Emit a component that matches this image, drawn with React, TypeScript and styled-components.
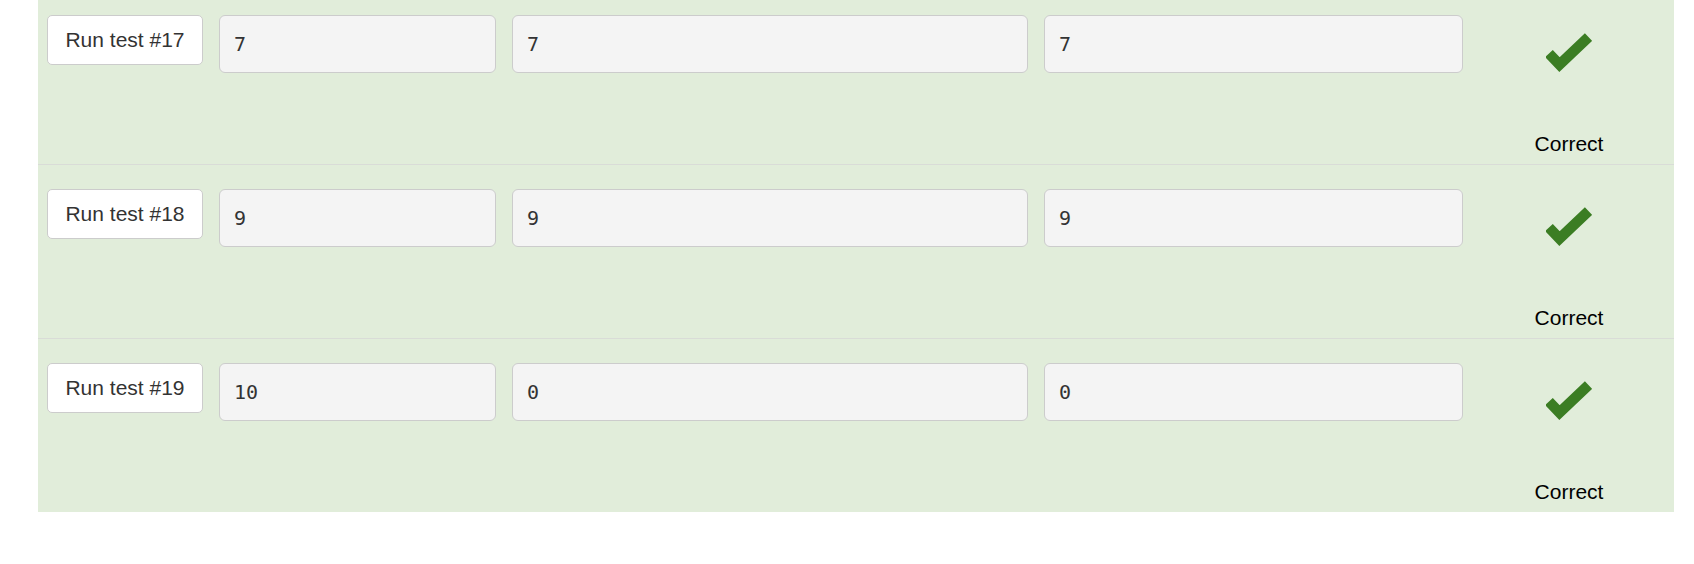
import React from "react";
import styled, { createGlobalStyle } from "styled-components";

const GlobalStyle = createGlobalStyle`
  html, body {
    margin: 0;
    padding: 0;
    background: #ffffff;
    font-family: "Liberation Sans", Arial, sans-serif;
  }
`;

const Page = styled.div`
  margin: -10px 0 0 38px;
  width: 1636px;
`;

const TestList = styled.div`
  display: flex;
  flex-direction: column;
  background: #e1edda;
`;

const TestRow = styled.div`
  display: grid;
  grid-template-columns: 156px 277px 516px 419px 1fr;
  column-gap: 16px;
  align-items: start;
  height: 174px;
  padding: 24px 15px 0 9px;
  box-sizing: border-box;
  border-top: 1px solid #d9dcd7;
  &:first-child {
    border-top-color: transparent;
  }
`;

const RunButton = styled.button`
  box-sizing: border-box;
  height: 50px;
  padding: 10px 0 10px;
  border: 1px solid #cccccc;
  border-radius: 5px;
  background: #ffffff;
  color: #333333;
  font-family: "Liberation Sans", Arial, sans-serif;
  font-size: 21px;
  line-height: 28px;
  text-align: center;
  white-space: nowrap;
  cursor: pointer;
`;

const ValueBox = styled.div`
  box-sizing: border-box;
  height: 58px;
  display: flex;
  align-items: center;
  padding: 0 14px;
  border: 1px solid #cccccc;
  border-radius: 6px;
  background: #f4f4f4;
  color: #333333;
  font-family: "DejaVu Sans Mono", "Liberation Mono", monospace;
  font-size: 20px;
`;

const ResultCell = styled.div`
  align-self: stretch;
  display: flex;
  flex-direction: column;
  align-items: center;
  padding-bottom: 8px;
`;

const CheckIcon = styled.svg`
  margin-top: 18px;
  width: 46px;
  height: 40px;
  display: block;
`;

const ResultLabel = styled.div`
  margin-top: auto;
  font-family: "Liberation Sans", Arial, sans-serif;
  font-size: 21px;
  line-height: 24px;
  color: #000000;
`;

const tests = [
  { id: 17, input: "7", expected: "7", actual: "7" },
  { id: 18, input: "9", expected: "9", actual: "9" },
  { id: 19, input: "10", expected: "0", actual: "0" },
];

const Check = () => (
  <CheckIcon viewBox="0 0 46 40">
    <polyline
      points="3,20.5 13.5,31.5 42.5,4"
      fill="none"
      stroke="#3b7d23"
      strokeWidth="10.5"
      strokeLinecap="butt"
      strokeLinejoin="miter"
    />
  </CheckIcon>
);

export default function App() {
  return (
    <>
      <GlobalStyle />
      <Page>
        <TestList>
          {tests.map((t) => (
            <TestRow key={t.id}>
              <RunButton>Run test #{t.id}</RunButton>
              <ValueBox>{t.input}</ValueBox>
              <ValueBox>{t.expected}</ValueBox>
              <ValueBox>{t.actual}</ValueBox>
              <ResultCell>
                <Check />
                <ResultLabel>Correct</ResultLabel>
              </ResultCell>
            </TestRow>
          ))}
        </TestList>
      </Page>
    </>
  );
}
